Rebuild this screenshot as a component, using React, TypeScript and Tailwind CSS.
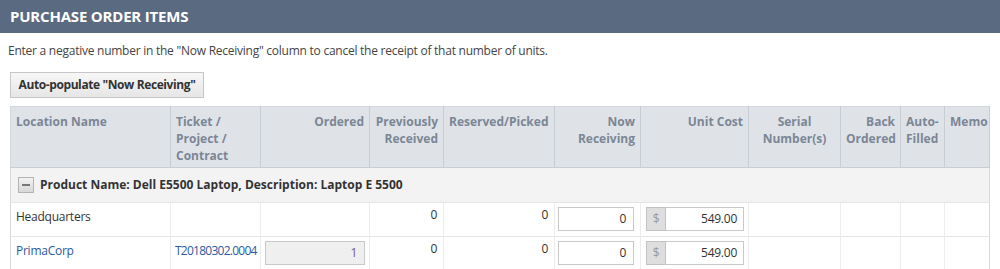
import React from 'react'

const font = { fontFamily: '"Open Sans", "Noto Sans", Arial, sans-serif' }

interface Col {
  label: React.ReactNode
  width: number
  align: 'left' | 'right' | 'center'
}

const cols: Col[] = [
  { label: 'Location Name', width: 160, align: 'left' },
  { label: <>Ticket /<br />Project /<br />Contract</>, width: 90, align: 'left' },
  { label: 'Ordered', width: 109, align: 'right' },
  { label: <>Previously<br />Received</>, width: 74, align: 'right' },
  { label: 'Reserved/Picked', width: 111, align: 'left' },
  { label: <>Now<br />Receiving</>, width: 86, align: 'right' },
  { label: 'Unit Cost', width: 108, align: 'right' },
  { label: <>Serial<br />Number(s)</>, width: 92, align: 'center' },
  { label: <>Back<br />Ordered</>, width: 60, align: 'right' },
  { label: <>Auto-<br />Filled</>, width: 44, align: 'left' },
  { label: 'Memo', width: 45, align: 'left' },
]

const rows = [
  { location: 'Headquarters', link: false, ticket: '', ordered: null as string | null },
  { location: 'PrimaCorp', link: true, ticket: 'T20180302.0004', ordered: '1' },
]

function QtyInput({ value }: { value: string }) {
  return (
    <div className="h-[24px] w-[76px] border border-[#c9c9c9] bg-white text-right pr-[7px] leading-[22px] text-[#333]">
      {value}
    </div>
  )
}

function CostInput({ value }: { value: string }) {
  return (
    <div className="flex h-[24px] w-[98px]">
      <div className="w-[20px] border border-[#c2c2c2] bg-[#dedede] text-center leading-[22px] text-[#999]">$</div>
      <div className="flex-1 border border-l-0 border-[#c9c9c9] bg-white text-right pr-[6px] leading-[22px] text-[#333]">
        {value}
      </div>
    </div>
  )
}

export default function App() {
  return (
    <div className="w-[1000px] h-[269px] overflow-hidden bg-white text-[12px] text-[#333]" style={font}>
      <div className="h-[33px] bg-[#5a6a80] pl-[10px] flex items-center">
        <h2 className="text-white font-bold text-[15px] tracking-[-0.2px]">PURCHASE ORDER ITEMS</h2>
      </div>
      <p className="pl-[8px] pt-[9px] leading-[17px] text-[#444] tracking-[-0.25px]">
        Enter a negative number in the "Now Receiving" column to cancel the receipt of that number of units.
      </p>
      <div className="pl-[10px] pt-[13px]">
        <button className="h-[26px] w-[194px] border border-[#c6c6c6] bg-gradient-to-b from-[#f7f7f7] to-[#e6e6e6] font-bold text-[#333] leading-[24px] tracking-[-0.4px]">
          Auto-populate "Now Receiving"
        </button>
      </div>
      <div className="pl-[10px] pt-[8px]">
        <table className="table-fixed border-collapse w-[979px] border border-[#d3d8dd]">
          <colgroup>
            {cols.map((c, i) => (
              <col key={i} style={{ width: c.width }} />
            ))}
          </colgroup>
          <thead>
            <tr className="h-[61px] bg-[#dfe3e7]">
              {cols.map((c, i) => (
                <th
                  key={i}
                  className={`align-top font-bold text-[#7b8696] leading-[17px] pt-[6px] px-[5px] border-r border-b border-[#c6cdd4] ${
                    c.align === 'right' ? 'text-right' : c.align === 'center' ? 'text-center' : 'text-left'
                  }`}
                >
                  {c.label}
                </th>
              ))}
            </tr>
          </thead>
          <tbody className="tracking-[-0.25px]">
            <tr className="h-[35px] bg-[#f3f3f3]">
              <td colSpan={11} className="px-[7px] border-b border-[#e4e4e4]">
                <div className="flex items-center gap-[6px] tracking-normal">
                  <span className="flex h-[16px] w-[16px] items-center justify-center border border-[#b3b3b3] bg-gradient-to-b from-[#f2f2f2] to-[#d8d8d8]">
                    <span className="block h-[2px] w-[8px] bg-[#777]" />
                  </span>
                  <span className="font-bold text-[#333]">Product Name: Dell E5500 Laptop, Description: Laptop E 5500</span>
                </div>
              </td>
            </tr>
            {rows.map((r, i) => (
              <tr key={i} className="h-[34px] border-b border-[#e4e4e4]">
                <td className="align-top pt-[5px] px-[5px] border-r border-[#ececec]">
                  <span className={r.link ? 'text-[#2b5aa0]' : 'text-[#333]'}>{r.location}</span>
                </td>
                <td className="align-top pt-[5px] px-[4px] border-r border-[#ececec] text-[#2b5aa0] tracking-[-0.75px] whitespace-nowrap">
                  {r.ticket}
                </td>
                <td className="align-top pt-[4px] px-[4px] border-r border-[#ececec]">
                  {r.ordered && (
                    <div className="h-[24px] w-[100px] border border-[#c9c9c9] bg-[#efefef] text-right pr-[7px] leading-[22px] text-[#7a5a8c]">
                      {r.ordered}
                    </div>
                  )}
                </td>
                <td className="align-top pt-[3px] pr-[6px] text-right border-r border-[#ececec]">0</td>
                <td className="align-top pt-[3px] pr-[6px] text-right border-r border-[#ececec]">0</td>
                <td className="align-top pt-[4px] pl-[3px] border-r border-[#ececec]">
                  <QtyInput value="0" />
                </td>
                <td className="align-top pt-[4px] pl-[5px] border-r border-[#ececec]">
                  <CostInput value="549.00" />
                </td>
                <td className="border-r border-[#ececec]" />
                <td className="border-r border-[#ececec]" />
                <td className="border-r border-[#ececec]" />
                <td />
              </tr>
            ))}
          </tbody>
        </table>
      </div>
    </div>
  )
}
